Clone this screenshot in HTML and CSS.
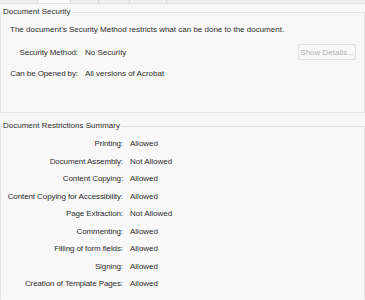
FILE: index.html
```html
<!DOCTYPE html>
<html>
<head>
<meta charset="utf-8">
<link rel="stylesheet" href="styles.css">
</head>
<body>
<div class="tabs">
  <div class="tab w38"></div>
  <div class="tab sel w33"></div>
  <div class="tab w28"></div>
  <div class="tab w31"></div>
  <div class="tab w37"></div>
  <div class="tab-rest"></div>
</div>
<fieldset class="group g1">
  <legend>Document Security</legend>
  <p class="desc">The document's Security Method restricts what can be done to the document.</p>
  <div class="rows sec">
    <span class="lbl">Security Method:</span><span class="val">No Security</span><button class="btn">Show Details...</button>
    <span class="lbl">Can be Opened by:</span><span class="val">All versions of Acrobat</span><span></span>
  </div>
</fieldset>
<fieldset class="group g2">
  <legend>Document Restrictions Summary</legend>
  <div class="rows sum">
    <span class="lbl">Printing:</span><span class="val">Allowed</span>
    <span class="lbl">Document Assembly:</span><span class="val">Not Allowed</span>
    <span class="lbl">Content Copying:</span><span class="val">Allowed</span>
    <span class="lbl">Content Copying for Accessibility:</span><span class="val">Allowed</span>
    <span class="lbl">Page Extraction:</span><span class="val">Not Allowed</span>
    <span class="lbl">Commenting:</span><span class="val">Allowed</span>
    <span class="lbl">Filling of form fields:</span><span class="val">Allowed</span>
    <span class="lbl">Signing:</span><span class="val">Allowed</span>
    <span class="lbl">Creation of Template Pages:</span><span class="val">Allowed</span>
  </div>
</fieldset>
</body>
</html>
```
FILE: styles.css
```css
html, body {
  margin: 0;
  padding: 0;
  background: #f8f8f8;
}
body {
  font-family: "Liberation Sans", Arial, sans-serif;
  font-size: 8px;
  color: #2e2e2e;
  height: 300px;
  overflow: hidden;
  display: flex;
  flex-direction: column;
}
.tabs {
  display: flex;
  flex: none;
  height: 3px;
  border-bottom: 1px solid #e2e2e2;
  background: #efefef;
}
.tab {
  box-sizing: border-box;
  border-right: 1px solid #d6d6d6;
  height: 100%;
}
.tab.sel { background: #fbfbfb; }
.w38 { width: 38px; }
.w33 { width: 33px; }
.w28 { width: 28px; }
.w31 { width: 31px; }
.w37 { width: 37px; }
.tab-rest { flex: 1; }
.group {
  margin: 0;
  padding: 0;
  border: 1px solid #e3e3e3;
  min-width: 0;
}
.g1 {
  flex: none;
  margin-top: 3px;
  padding-bottom: 31px;
}
.g2 {
  flex: 1;
  margin-top: 8px;
  border-bottom-color: transparent;
}
legend {
  margin-left: 1px;
  padding: 0 1px;
  line-height: 10px;
}
.desc {
  margin: 8px 0 0 9px;
  line-height: 10px;
}
.rows {
  display: grid;
  column-gap: 7px;
  align-items: center;
}
.rows .lbl { text-align: right; white-space: nowrap; letter-spacing: -0.1px; }
.rows .val { white-space: nowrap; }
.sec {
  margin-top: 9px;
  grid-template-columns: 77px auto 1fr;
  grid-auto-rows: 16px;
  row-gap: 5px;
}
.btn {
  justify-self: end;
  margin-right: 8px;
  width: 58px;
  height: 16px;
  padding: 0;
  font: inherit;
  color: #b0b0b0;
  background: #f9f9f9;
  border: 1px solid #e0e0e0;
  border-radius: 2px;
}
.sum {
  margin-top: 4px;
  grid-template-columns: 122px 1fr;
  grid-auto-rows: 17.5px;
}
```
